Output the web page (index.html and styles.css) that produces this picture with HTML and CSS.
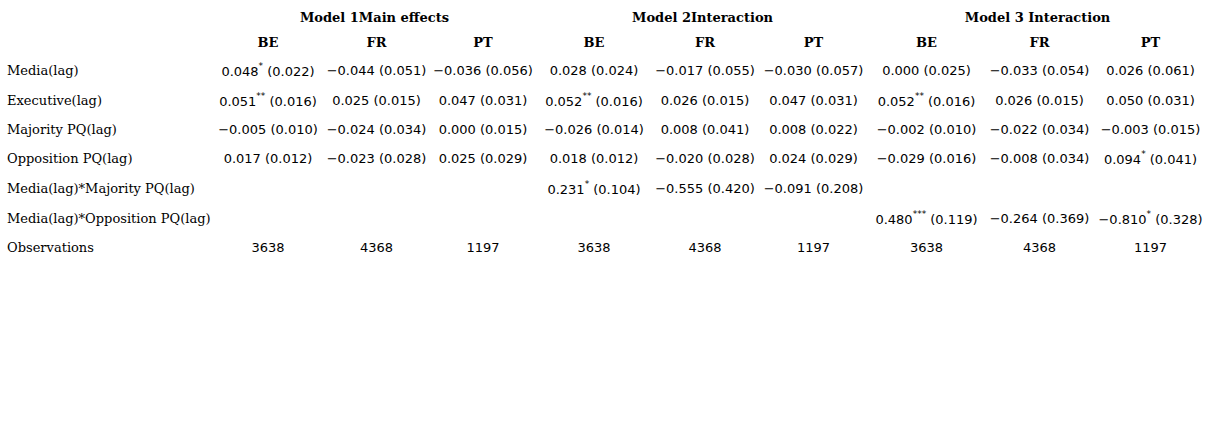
FILE: index.html
```html
<!DOCTYPE html>
<html lang="en">
<head>
<meta charset="utf-8">
<title>Regression results</title>
<link rel="stylesheet" href="styles.css">
</head>
<body>
<table class="results">
  <colgroup>
    <col class="c-label">
    <col class="c1"><col class="c2"><col class="c3">
    <col class="c4"><col class="c5"><col class="c6">
    <col class="c7"><col class="c8"><col class="c9">
  </colgroup>
  <thead>
    <tr class="model-row">
      <th></th>
      <th colspan="3">Model 1Main effects</th>
      <th colspan="3">Model 2Interaction</th>
      <th colspan="3">Model 3 Interaction</th>
    </tr>
    <tr class="country-row">
      <th></th>
      <th>BE</th><th>FR</th><th>PT</th>
      <th>BE</th><th>FR</th><th>PT</th>
      <th>BE</th><th>FR</th><th>PT</th>
    </tr>
  </thead>
  <tbody>
    <tr>
      <td class="label">Media(lag)</td>
      <td>0.048<sup>*</sup> (0.022)</td><td>−0.044 (0.051)</td><td>−0.036 (0.056)</td>
      <td>0.028 (0.024)</td><td>−0.017 (0.055)</td><td>−0.030 (0.057)</td>
      <td>0.000 (0.025)</td><td>−0.033 (0.054)</td><td>0.026 (0.061)</td>
    </tr>
    <tr>
      <td class="label">Executive(lag)</td>
      <td>0.051<sup>**</sup> (0.016)</td><td>0.025 (0.015)</td><td>0.047 (0.031)</td>
      <td>0.052<sup>**</sup> (0.016)</td><td>0.026 (0.015)</td><td>0.047 (0.031)</td>
      <td>0.052<sup>**</sup> (0.016)</td><td>0.026 (0.015)</td><td>0.050 (0.031)</td>
    </tr>
    <tr>
      <td class="label">Majority PQ(lag)</td>
      <td>−0.005 (0.010)</td><td>−0.024 (0.034)</td><td>0.000 (0.015)</td>
      <td>−0.026 (0.014)</td><td>0.008 (0.041)</td><td>0.008 (0.022)</td>
      <td>−0.002 (0.010)</td><td>−0.022 (0.034)</td><td>−0.003 (0.015)</td>
    </tr>
    <tr>
      <td class="label">Opposition PQ(lag)</td>
      <td>0.017 (0.012)</td><td>−0.023 (0.028)</td><td>0.025 (0.029)</td>
      <td>0.018 (0.012)</td><td>−0.020 (0.028)</td><td>0.024 (0.029)</td>
      <td>−0.029 (0.016)</td><td>−0.008 (0.034)</td><td>0.094<sup>*</sup> (0.041)</td>
    </tr>
    <tr>
      <td class="label">Media(lag)*Majority PQ(lag)</td>
      <td></td><td></td><td></td>
      <td>0.231<sup>*</sup> (0.104)</td><td>−0.555 (0.420)</td><td>−0.091 (0.208)</td>
      <td></td><td></td><td></td>
    </tr>
    <tr>
      <td class="label">Media(lag)*Opposition PQ(lag)</td>
      <td></td><td></td><td></td>
      <td></td><td></td><td></td>
      <td>0.480<sup>***</sup> (0.119)</td><td>−0.264 (0.369)</td><td>−0.810<sup>*</sup> (0.328)</td>
    </tr>
    <tr>
      <td class="label">Observations</td>
      <td>3638</td><td>4368</td><td>1197</td>
      <td>3638</td><td>4368</td><td>1197</td>
      <td>3638</td><td>4368</td><td>1197</td>
    </tr>
  </tbody>
</table>
</body>
</html>
```

FILE: styles.css
```css
html, body {
  margin: 0;
  padding: 0;
  background: #ffffff;
  color: #000000;
}

.results {
  table-layout: fixed;
  border-collapse: collapse;
  width: 1206px;
  margin-top: 6px;
  font-family: "DejaVu Sans", sans-serif;
  font-size: 13px;
}

.c-label { width: 213px; }
.c1 { width: 110px; }
.c2 { width: 107px; }
.c3 { width: 106px; }
.c4 { width: 116px; }
.c5 { width: 106px; }
.c6 { width: 111px; }
.c7 { width: 115px; }
.c8 { width: 111px; }
.c9 { width: 111px; }

.results th {
  font-family: "DejaVu Serif", serif;
  font-weight: bold;
  font-size: 13px;
  text-align: center;
  white-space: nowrap;
  line-height: 17px;
}

.model-row th {
  padding: 3px 0;
}

.country-row th {
  padding: 5px 0;
}

.results td {
  text-align: center;
  white-space: nowrap;
  vertical-align: middle;
  line-height: 16px;
  padding: 6px 0;
}

.results td.label {
  text-align: left;
  padding-left: 7px;
  font-family: "DejaVu Serif", serif;
}

.results sup {
  font-size: 9px;
  line-height: 9px;
  vertical-align: 7px;
}
```
